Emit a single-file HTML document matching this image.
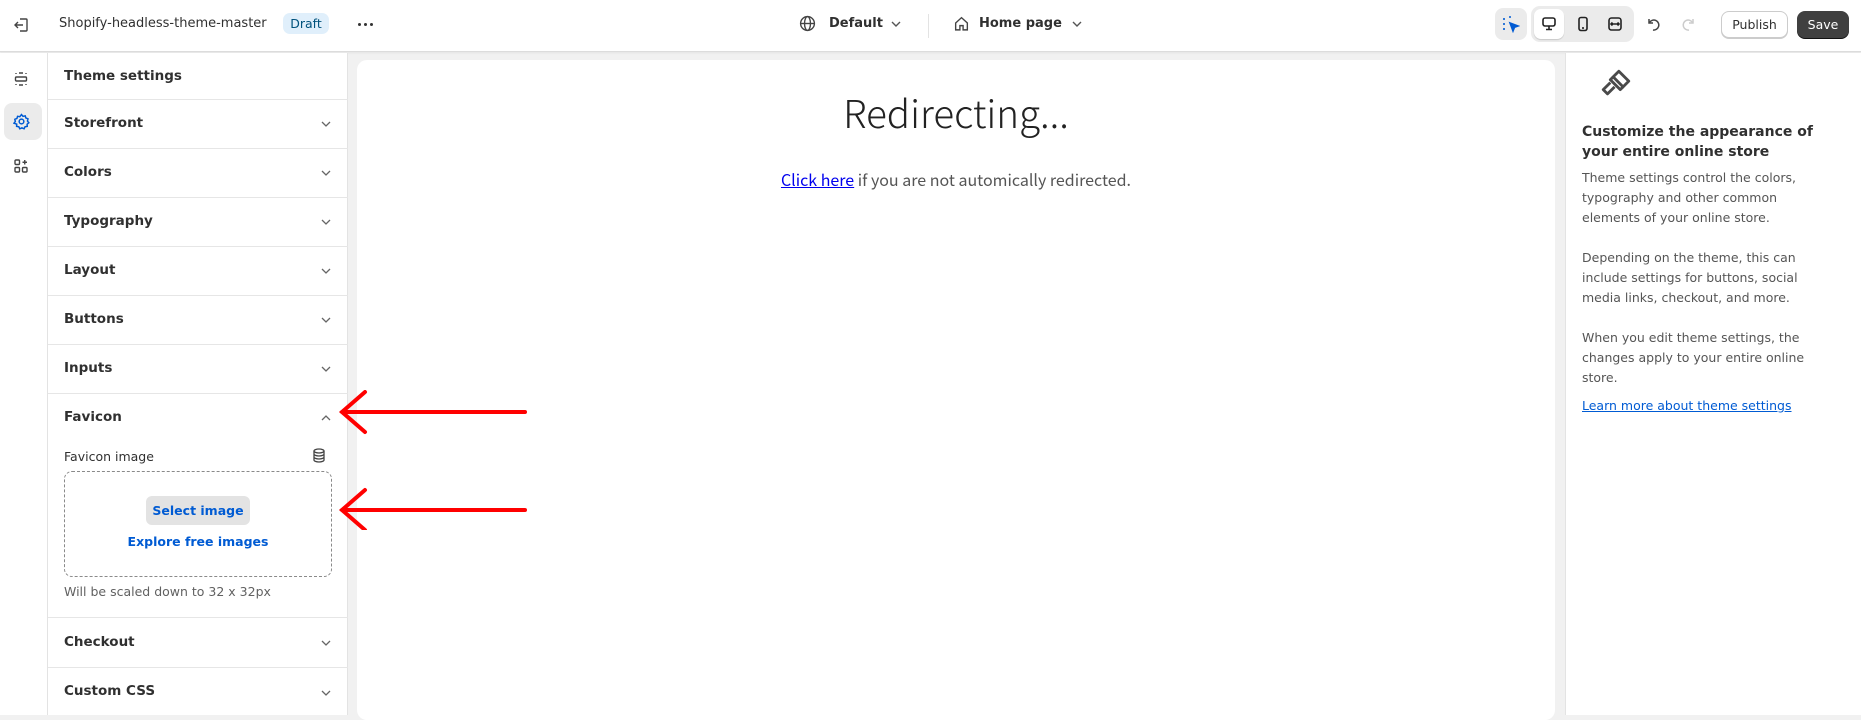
<!DOCTYPE html>
<html><head><meta charset="utf-8"><style>
*{box-sizing:border-box;margin:0;padding:0}
body{width:1861px;height:715px;overflow:hidden;background:#f1f1f1;font-family:"DejaVu Sans","Liberation Sans",sans-serif;color:#303030;position:relative}
.top{position:absolute;left:0;top:0;width:1861px;height:52px;background:#fff;border-bottom:1px solid #dcdcdc;box-shadow:0 1px 2px rgba(0,0,0,.06)}
.a{position:absolute}
.rail{position:absolute;left:0;top:53px;width:48px;height:662px;background:#fff;border-right:1px solid #e3e3e3}
.side{position:absolute;left:48px;top:53px;width:300px;height:662px;background:#fff;border-right:1px solid #e3e3e3}
.row{position:absolute;left:0;width:300px;border-top:1px solid #e6e6e6;font-weight:bold;font-size:13.5px}
.row span{position:absolute;left:16px}
.canvas{position:absolute;left:357px;top:60px;width:1198px;height:660px;background:#fff;border-radius:10px}
.right{position:absolute;left:1565px;top:53px;width:296px;height:662px;background:#fff;border-left:1px solid #e3e3e3}
.right p{position:absolute;left:16px;width:228px;font-size:12.5px;line-height:20px;color:#555}
.dot{position:absolute;width:3px;height:3px;border-radius:50%;background:#333;top:23px}
</style></head><body>
<div class="top">
 <svg class="a" style="left:13px;top:16px" width="18" height="18" viewBox="0 0 18 18" fill="none" stroke="#444" stroke-width="1.4"><path d="M7 3h6a1 1 0 0 1 1 1v10a1 1 0 0 1-1 1H7"/><path d="M10 9H2M5 6 2 9l3 3"/></svg>
 <div class="a" style="left:59px;top:16px;font-size:13px;color:#303030">Shopify-headless-theme-master</div>
 <div class="a" style="left:283px;top:13px;width:46px;height:21px;background:#e0effb;border-radius:7px;font-size:12.5px;color:#00527c;text-align:center;line-height:21px">Draft</div>
 <div class="dot" style="left:358px"></div><div class="dot" style="left:364px"></div><div class="dot" style="left:370px"></div>
 <svg class="a" style="left:799px;top:15px" width="17" height="17" viewBox="0 0 16 16" fill="none" stroke="#444" stroke-width="1.3"><circle cx="8" cy="8" r="6.5"/><ellipse cx="8" cy="8" rx="2.8" ry="6.5"/><path d="M1.5 8h13"/></svg>
 <div class="a" style="left:829px;top:16px;font-size:13px;font-weight:bold">Default</div>
 <svg class="a" style="left:890px;top:19px" width="12" height="10" viewBox="0 0 12 10" fill="none" stroke="#555" stroke-width="1.4"><path d="M2 3l4 4 4-4"/></svg>
 <div class="a" style="left:928px;top:14px;width:1px;height:24px;background:#e3e3e3"></div>
 <svg class="a" style="left:953px;top:15px" width="17" height="17" viewBox="0 0 16 16" fill="none" stroke="#444" stroke-width="1.3"><path d="M2.5 7.5 8 2.5l5.5 5V14h-4v-4h-3v4h-4z"/></svg>
 <div class="a" style="left:979px;top:16px;font-size:13px;font-weight:bold">Home page</div>
 <svg class="a" style="left:1071px;top:19px" width="12" height="10" viewBox="0 0 12 10" fill="none" stroke="#555" stroke-width="1.4"><path d="M2 3l4 4 4-4"/></svg>
 <div class="a" style="left:1495px;top:8px;width:32px;height:32px;background:#ebebeb;border-radius:8px"></div>
 <svg class="a" style="left:1502px;top:15px" width="18" height="18" viewBox="0 0 18 18" fill="none" stroke="#005bd3" stroke-width="1.6"><path d="M2 5V3h2M7 2h2M2 8v2M2 13v2h2" stroke-dasharray="2 2"/><path d="M8 8l8 3-3.5 1.2L11 16z" fill="#005bd3"/></svg>
 <div class="a" style="left:1531px;top:6px;width:103px;height:36px;background:#ebebeb;border-radius:9px"></div>
 <div class="a" style="left:1534px;top:9px;width:30px;height:30px;background:#fff;border-radius:7px;box-shadow:0 1px 1px rgba(0,0,0,.15)"></div>
 <svg class="a" style="left:1541px;top:16px" width="16" height="16" viewBox="0 0 16 16" fill="none" stroke="#222" stroke-width="1.6"><rect x="2" y="2" width="12" height="8" rx="2"/><path d="M8 10v3M5 13.5h6"/></svg>
 <svg class="a" style="left:1575px;top:16px" width="16" height="16" viewBox="0 0 16 16" fill="none" stroke="#222" stroke-width="1.6"><rect x="4" y="1.5" width="8" height="13" rx="2"/><path d="M7 12h2"/></svg>
 <svg class="a" style="left:1607px;top:16px" width="16" height="16" viewBox="0 0 16 16" fill="none" stroke="#222" stroke-width="1.6"><rect x="2" y="2" width="12" height="12" rx="2.5"/><path d="M4.5 8h7M5.5 6.5 4 8l1.5 1.5M10.5 6.5 12 8l-1.5 1.5"/></svg>
 <svg class="a" style="left:1645px;top:16px" width="16" height="16" viewBox="0 0 16 16" fill="none" stroke="#444" stroke-width="1.5"><path d="M4 3v4h4"/><path d="M4.5 6.5A5 5 0 1 1 8 14"/></svg>
 <svg class="a" style="left:1681px;top:16px" width="16" height="16" viewBox="0 0 16 16" fill="none" stroke="#ccc" stroke-width="1.5"><path d="M12 3v4H8"/><path d="M11.5 6.5A5 5 0 1 0 8 14"/></svg>
 <div class="a" style="left:1721px;top:11px;width:67px;height:27px;border:1px solid #ccc;border-radius:8px;background:#fff;font-size:12.5px;text-align:center;line-height:25px;box-shadow:0 1px 0 #ccc">Publish</div>
 <div class="a" style="left:1797px;top:11px;width:52px;height:27px;border-radius:8px;background:#404040;color:#fff;font-size:12.5px;text-align:center;line-height:27px;box-shadow:0 1px 0 #111">Save</div>
</div>
<div class="rail">
 <svg class="a" style="left:13px;top:18px" width="16" height="16" viewBox="0 0 16 16" fill="none" stroke="#444" stroke-width="1.4"><path d="M3 2v1M13 2v1M3 13v1M13 13v1M6 2h4M6 14h4" /><rect x="2.5" y="6" width="11" height="4" rx="1"/></svg>
 <div class="a" style="left:4px;top:50px;width:38px;height:37px;background:#ebebeb;border-radius:8px"></div>
 <svg class="a" style="left:13px;top:60px" width="17" height="17" viewBox="0 0 16 16" fill="none" stroke="#005bd3" stroke-width="1.4"><circle cx="8" cy="8" r="2.2"/><path d="M8 1.5l1.4 1.6 2.1-.4.6 2 2 .8-.5 2.1 1.3 1.6-1.6 1.3.1 2.1-2.1.4-.9 1.9-2-.9-2 .9-.9-1.9-2.1-.4.1-2.1L.9 9.6l1.3-1.6-.5-2.1 2-.8.6-2 2.1.4z"/></svg>
 <svg class="a" style="left:13px;top:105px" width="16" height="16" viewBox="0 0 16 16" fill="none" stroke="#444" stroke-width="1.4"><rect x="2" y="2" width="4.5" height="4.5" rx="1"/><rect x="2" y="9.5" width="4.5" height="4.5" rx="1"/><rect x="9.5" y="9.5" width="4.5" height="4.5" rx="1"/><path d="M11.75 2v4.5M9.5 4.25h4.5"/></svg>
</div>
<div class="side">
 <div class="a" style="left:16px;top:15px;font-size:13.5px;font-weight:bold">Theme settings</div>
 <div class="row" style="top:46px;height:49px"><span style="top:15px">Storefront</span></div>
 <div class="row" style="top:95px;height:49px"><span style="top:15px">Colors</span></div>
 <div class="row" style="top:144px;height:49px"><span style="top:15px">Typography</span></div>
 <div class="row" style="top:193px;height:49px"><span style="top:15px">Layout</span></div>
 <div class="row" style="top:242px;height:49px"><span style="top:15px">Buttons</span></div>
 <div class="row" style="top:291px;height:49px"><span style="top:15px">Inputs</span></div>
 <div class="row" style="top:340px;height:224px"><span style="top:15px">Favicon</span></div>
 <div class="row" style="top:564px;height:50px"><span style="top:16px">Checkout</span></div>
 <div class="row" style="top:614px;height:50px"><span style="top:15px">Custom CSS</span></div>
 <svg class="a" style="left:272px;top:67px" width="12" height="8" viewBox="0 0 12 8" fill="none" stroke="#666" stroke-width="1.3"><path d="M2 2l4 4 4-4"/></svg>
 <svg class="a" style="left:272px;top:116px" width="12" height="8" viewBox="0 0 12 8" fill="none" stroke="#666" stroke-width="1.3"><path d="M2 2l4 4 4-4"/></svg>
 <svg class="a" style="left:272px;top:165px" width="12" height="8" viewBox="0 0 12 8" fill="none" stroke="#666" stroke-width="1.3"><path d="M2 2l4 4 4-4"/></svg>
 <svg class="a" style="left:272px;top:214px" width="12" height="8" viewBox="0 0 12 8" fill="none" stroke="#666" stroke-width="1.3"><path d="M2 2l4 4 4-4"/></svg>
 <svg class="a" style="left:272px;top:263px" width="12" height="8" viewBox="0 0 12 8" fill="none" stroke="#666" stroke-width="1.3"><path d="M2 2l4 4 4-4"/></svg>
 <svg class="a" style="left:272px;top:312px" width="12" height="8" viewBox="0 0 12 8" fill="none" stroke="#666" stroke-width="1.3"><path d="M2 2l4 4 4-4"/></svg>
 <svg class="a" style="left:272px;top:361px" width="12" height="8" viewBox="0 0 12 8" fill="none" stroke="#666" stroke-width="1.3"><path d="M2 6l4-4 4 4"/></svg>
 <svg class="a" style="left:272px;top:586px" width="12" height="8" viewBox="0 0 12 8" fill="none" stroke="#666" stroke-width="1.3"><path d="M2 2l4 4 4-4"/></svg>
 <svg class="a" style="left:272px;top:636px" width="12" height="8" viewBox="0 0 12 8" fill="none" stroke="#666" stroke-width="1.3"><path d="M2 2l4 4 4-4"/></svg>
 <div class="a" style="left:16px;top:396px;font-size:12.5px;color:#303030">Favicon image</div>
 <svg class="a" style="left:264px;top:395px" width="14" height="15" viewBox="0 0 14 15" fill="none" stroke="#444" stroke-width="1.3"><ellipse cx="7" cy="3" rx="5" ry="2"/><path d="M2 3v9c0 1.1 2.2 2 5 2s5-.9 5-2V3M2 6c0 1.1 2.2 2 5 2s5-.9 5-2M2 9c0 1.1 2.2 2 5 2s5-.9 5-2"/></svg>
 <div class="a" style="left:16px;top:418px;width:268px;height:106px;border:1px dashed #8a8a8a;border-radius:8px"></div>
 <div class="a" style="left:98px;top:443px;width:104px;height:29px;background:#e3e3e3;border-radius:6px;font-size:12.5px;font-weight:bold;color:#005bd3;text-align:center;line-height:29px">Select image</div>
 <div class="a" style="left:16px;top:481px;width:268px;text-align:center;font-size:12.5px;font-weight:bold;color:#005bd3">Explore free images</div>
 <div class="a" style="left:16px;top:531px;font-size:12.5px;color:#616161">Will be scaled down to 32 x 32px</div>
</div>
<div class="canvas">
 <div class="a" style="left:0;top:24px;width:1198px;text-align:center;font-family:'Noto Sans CJK JP',sans-serif;font-weight:300;font-size:38.5px;color:#222">Redirecting...</div>
 <div class="a" style="left:0;top:107px;width:1198px;text-align:center;font-family:'Noto Sans CJK JP',sans-serif;font-weight:400;font-size:16px;color:#555"><span style="color:#0000ee;text-decoration:underline">Click here</span> if you are not automically redirected.</div>
</div>
<svg class="a" style="left:330px;top:390px" width="200" height="140" viewBox="0 0 200 140" fill="none" stroke="#f00" stroke-width="4" stroke-linecap="round"><path d="M195 22H12M35 2 12 22l23 20"/><path d="M195 120H12M35 100 12 120l23 20"/></svg>
<div class="right">
 <svg class="a" style="left:33px;top:14px" width="34" height="34" viewBox="0 0 24 24" fill="none" stroke="#4a4a4a" stroke-width="2" stroke-linejoin="round"><path d="M14 3l7 7-4 4-7-7z"/><path d="M10 7l-2 2 7 7 2-2M8 11l-5 5 3 3 5-5"/></svg>
 <div class="a" style="left:16px;top:69px;width:270px;font-size:14px;font-weight:bold;line-height:20px;color:#303030">Customize the appearance of your entire online store</div>
 <p style="top:115px">Theme settings control the colors, typography and other common elements of your online store.</p>
 <p style="top:195px">Depending on the theme, this can include settings for buttons, social media links, checkout, and more.</p>
 <p style="top:275px">When you edit theme settings, the changes apply to your entire online store.</p>
 <p style="top:343px;width:260px;color:#005bd3;text-decoration:underline">Learn more about theme settings</p>
</div>
</body></html>
